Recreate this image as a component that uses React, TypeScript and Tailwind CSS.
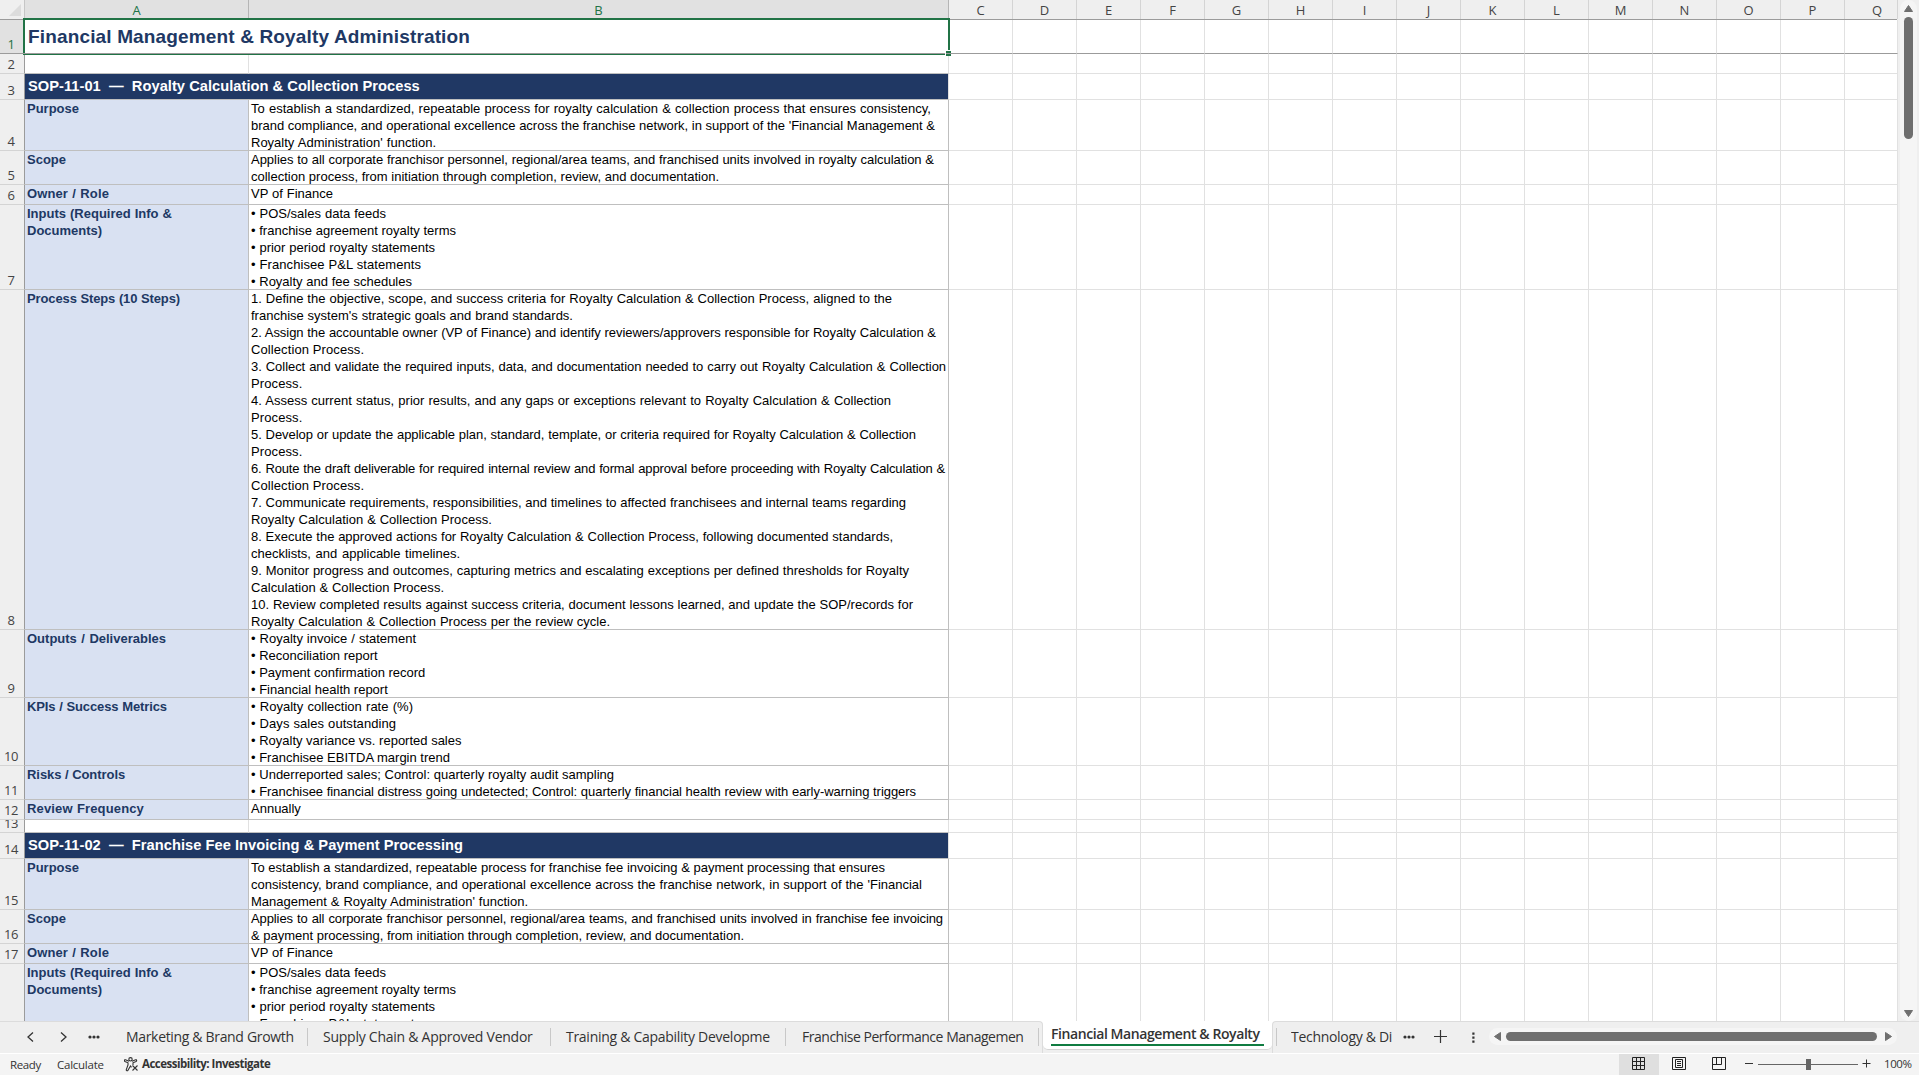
import React from "react";

const gridColumns = ["C", "D", "E", "F", "G", "H", "I", "J", "K", "L", "M", "N", "O", "P", "Q"];

// text of one printed line, its width in px and an optional tracking class
type Line = [string, number, string?];

type Row = {
  height: string;
  label?: Line[];
  title?: string;
  banner?: string;
  lines?: Line[];
};

const inputsLabel: Line[] = [["Inputs (Required Info &", 145], ["Documents)", 74]];
const ownerLabel: Line[] = [["Owner / Role", 82, "tracking-[0.12px]"]];

const inputs: Line[] = [
  ["• POS/sales data feeds", 135],
  ["• franchise agreement royalty terms", 205],
  ["• prior period royalty statements", 184],
  ["• Franchisee P&L statements", 170, "tracking-[0.06px]"],
  ["• Royalty and fee schedules", 161],
];

const rows: Row[] = [
  { height: "h-[34px]", title: "Financial Management & Royalty Administration" },
  { height: "h-5" },
  { height: "h-[26px]", banner: "SOP-11-01  —  Royalty Calculation & Collection Process" },
  {
    height: "h-[51px]",
    label: [["Purpose", 52]],
    lines: [
      ["To establish a standardized, repeatable process for royalty calculation & collection process that ensures consistency,", 680, "tracking-[0.03px]"],
      ["brand compliance, and operational excellence across the franchise network, in support of the 'Financial Management &", 684],
      ["Royalty Administration' function.", 185],
    ],
  },
  {
    height: "h-[34px]",
    label: [["Scope", 40]],
    lines: [
      ["Applies to all corporate franchisor personnel, regional/area teams, and franchised units involved in royalty calculation &", 683, "tracking-[-0.03px]"],
      ["collection process, from initiation through completion, review, and documentation.", 468],
    ],
  },
  { height: "h-5", label: ownerLabel, lines: [["VP of Finance", 82]] },
  { height: "h-[85px]", label: inputsLabel, lines: inputs },
  {
    height: "h-[340px]",
    label: [["Process Steps (10 Steps)", 153, "tracking-[-0.12px]"]],
    lines: [
      ["1. Define the objective, scope, and success criteria for Royalty Calculation & Collection Process, aligned to the", 641],
      ["franchise system's strategic goals and brand standards.", 322],
      ["2. Assign the accountable owner (VP of Finance) and identify reviewers/approvers responsible for Royalty Calculation &", 685, "tracking-[-0.04px]"],
      ["Collection Process.", 112, "tracking-[0.1px]"],
      ["3. Collect and validate the required inputs, data, and documentation needed to carry out Royalty Calculation & Collection", 695, "tracking-[-0.05px]"],
      ["Process.", 51, "tracking-[0.1px]"],
      ["4. Assess current status, prior results, and any gaps or exceptions relevant to Royalty Calculation & Collection", 640],
      ["Process.", 51, "tracking-[0.1px]"],
      ["5. Develop or update the applicable plan, standard, template, or criteria required for Royalty Calculation & Collection", 665, "tracking-[-0.05px]"],
      ["Process.", 51, "tracking-[0.1px]"],
      ["6. Route the draft deliverable for required internal review and formal approval before proceeding with Royalty Calculation &", 694, "tracking-[-0.16px]"],
      ["Collection Process.", 112, "tracking-[0.1px]"],
      ["7. Communicate requirements, responsibilities, and timelines to affected franchisees and internal teams regarding", 655],
      ["Royalty Calculation & Collection Process.", 241, "tracking-[0.05px]"],
      ["8. Execute the approved actions for Royalty Calculation & Collection Process, following documented standards,", 642],
      ["checklists, and applicable timelines.", 209],
      ["9. Monitor progress and outcomes, capturing metrics and escalating exceptions per defined thresholds for Royalty", 658],
      ["Calculation & Collection Process.", 193, "tracking-[0.05px]"],
      ["10. Review completed results against success criteria, document lessons learned, and update the SOP/records for", 662],
      ["Royalty Calculation & Collection Process per the review cycle.", 359],
    ],
  },
  {
    height: "h-[68px]",
    label: [["Outputs / Deliverables", 139]],
    lines: [
      ["• Royalty invoice / statement", 165],
      ["• Reconciliation report", 126],
      ["• Payment confirmation record", 174],
      ["• Financial health report", 136],
    ],
  },
  {
    height: "h-[68px]",
    label: [["KPIs / Success Metrics", 140, "tracking-[-0.1px]"]],
    lines: [
      ["• Royalty collection rate (%)", 162],
      ["• Days sales outstanding", 145, "tracking-[0.06px]"],
      ["• Royalty variance vs. reported sales", 209],
      ["• Franchisee EBITDA margin trend", 199],
    ],
  },
  {
    height: "h-[34px]",
    label: [["Risks / Controls", 96, "tracking-[-0.05px]"]],
    lines: [
      ["• Underreported sales; Control: quarterly royalty audit sampling", 363],
      ["• Franchisee financial distress going undetected; Control: quarterly financial health review with early-warning triggers", 665, "tracking-[-0.05px]"],
    ],
  },
  { height: "h-5", label: [["Review Frequency", 117, "tracking-[0.15px]"]], lines: [["Annually", 51]] },
  { height: "h-[13px]" },
  { height: "h-[26px]", banner: "SOP-11-02  —  Franchise Fee Invoicing & Payment Processing" },
  {
    height: "h-[51px]",
    label: [["Purpose", 52]],
    lines: [
      ["To establish a standardized, repeatable process for franchise fee invoicing & payment processing that ensures", 634],
      ["consistency, brand compliance, and operational excellence across the franchise network, in support of the 'Financial", 671],
      ["Management & Royalty Administration' function.", 277],
    ],
  },
  {
    height: "h-[34px]",
    label: [["Scope", 40]],
    lines: [
      ["Applies to all corporate franchisor personnel, regional/area teams, and franchised units involved in franchise fee invoicing", 692, "tracking-[-0.1px]"],
      ["& payment processing, from initiation through completion, review, and documentation.", 493],
    ],
  },
  { height: "h-5", label: ownerLabel, lines: [["VP of Finance", 82]] },
  { height: "h-[57px]", label: inputsLabel, lines: inputs.slice(0, 4) },
];

const tabs = [
  { name: "Marketing & Brand Growth", style: "w-[181px] tracking-[-0.33px]" },
  { name: "Supply Chain & Approved Vendor", style: "w-[242px] pl-[15px] tracking-[-0.25px]" },
  { name: "Training & Capability Developme", style: "w-[234px] pl-[15px] tracking-[-0.28px]" },
  { name: "Franchise Performance Managemen", style: "w-[252px] pl-4 tracking-[-0.48px]" },
];

const CellText: React.FC<{ lines?: Line[] }> = ({ lines }) => (
  <>
    {lines?.map(([text, width, tracking], i) => (
      <div key={i} className={`h-[17px] text-justify [text-align-last:justify] ${tracking ?? ""}`} style={{ width }}>
        {text}
      </div>
    ))}
  </>
);

const SheetRow: React.FC<{ row: Row; number: number }> = ({ row, number }) => {
  const isFirst = number === 1;
  const isLast = number === rows.length;
  const bottom = isLast ? "border-b-0" : "border-b";
  const lineColor = isFirst ? "border-b-[#9b9b9b]" : "border-b-[#e1e1e1]";
  const tableLine = isFirst ? "border-b-[#9b9b9b]" : "border-b-[#bfbfbf]";

  return (
    <div className={`flex shrink-0 ${row.height}`}>
      <div
        className={`w-[25px] shrink-0 flex items-end justify-center overflow-hidden border-r border-r-[#9b9b9b] pr-0.5 pb-px font-['Open_Sans','Noto_Sans',sans-serif] text-[13px] leading-4 tracking-[-0.4px] ${bottom} ${
          isFirst ? "bg-[#e1e1e1] text-[#217346] border-b-[#9b9b9b]" : "bg-[#efefef] text-[#444] border-b-[#d4d4d4]"
        }`}
      >
        {!isLast && number}
      </div>

      {row.title && (
        <div className={`w-[924px] shrink-0 border-b border-r border-r-[#e1e1e1] pl-[3px] pt-px text-[19px] leading-8 tracking-[0.15px] font-bold text-[#203864] ${tableLine}`}>
          {row.title}
        </div>
      )}
      {row.banner && (
        <div className={`w-[924px] shrink-0 border-b border-r border-r-[#e1e1e1] bg-[#203864] bg-clip-padding pl-[3px] text-[14.67px] leading-6 tracking-[0.03px] font-bold text-white whitespace-pre ${tableLine}`}>
          {row.banner}
        </div>
      )}
      {!row.title && !row.banner && (
        <>
          <div
            className={`w-56 shrink-0 overflow-hidden border-r pl-0.5 text-[13px] leading-[17px] font-bold text-[#203864] whitespace-nowrap ${bottom} ${tableLine} ${
              row.label ? "bg-[#d9e1f2] border-r-[#bfbfbf]" : "border-r-[#e1e1e1]"
            }`}
          >
            <CellText lines={row.label} />
          </div>
          <div
            className={`w-[700px] shrink-0 overflow-hidden border-r pl-0.5 text-[13px] leading-[17px] text-black whitespace-nowrap ${bottom} ${tableLine} ${
              row.lines ? "border-r-[#bfbfbf]" : "border-r-[#e1e1e1]"
            }`}
          >
            <CellText lines={row.lines} />
          </div>
        </>
      )}

      {gridColumns.map((col) => (
        <div key={col} className={`border-r border-r-[#e1e1e1] ${bottom} ${lineColor} ${col === "Q" ? "w-[53px]" : "w-16"} shrink-0`} />
      ))}
    </div>
  );
};

const ColumnHeaders: React.FC = () => (
  <div className="flex h-5 shrink-0 border-b border-[#9b9b9b] bg-[#efefef] font-['Open_Sans','Noto_Sans',sans-serif] text-[13px] leading-[21px] text-[#444] text-center">
    <div className="w-[25px] shrink-0 border-r border-[#c6c6c6] flex items-end justify-end pr-[3px] pb-[3px]">
      <svg width="12" height="12" viewBox="0 0 12 12">
        <path d="M12 0V12H0Z" fill="#dcdcdc" />
      </svg>
    </div>
    <div className="w-56 shrink-0 border-r border-[#b5b5b5] bg-[#e1e1e1] text-[#217346]">A</div>
    <div className="w-[700px] shrink-0 border-r border-[#b5b5b5] bg-[#e1e1e1] text-[#217346]">B</div>
    {gridColumns.map((col) => (
      <div key={col} className={`shrink-0 border-r border-[#d4d4d4] ${col === "Q" ? "w-[53px] pl-3" : "w-16"}`}>
        {col}
      </div>
    ))}
  </div>
);

const VerticalScrollbar: React.FC = () => (
  <div className="w-[22px] shrink-0 bg-[#efefef] pl-[3px]">
    <div className="flex h-full w-[17px] flex-col items-center rounded-full bg-[#f5f5f5] pt-[5px] pb-1">
      <svg width="9" height="7" viewBox="0 0 9 7">
        <path d="M4.5 0.5L8.5 6.5H0.5Z" fill="#6f6f6f" stroke="#6f6f6f" strokeLinejoin="round" />
      </svg>
      <div className="mt-[5px] h-[122px] w-[9px] rounded-full bg-[#6f6f6f]" />
      <svg className="mt-auto" width="9" height="7" viewBox="0 0 9 7">
        <path d="M4.5 6.5L0.5 0.5H8.5Z" fill="#6f6f6f" stroke="#6f6f6f" strokeLinejoin="round" />
      </svg>
    </div>
  </div>
);

const Divider: React.FC = () => <div className="mt-1.5 h-[18px] w-px shrink-0 bg-[#c8c8c8]" />;

const Dots: React.FC = () => (
  <svg className="mt-[13px] shrink-0" width="12" height="4" viewBox="0 0 12 4" fill="#333">
    <circle cx="2" cy="2" r="1.6" />
    <circle cx="6" cy="2" r="1.6" />
    <circle cx="10" cy="2" r="1.6" />
  </svg>
);

const SheetTabs: React.FC = () => (
  <div className="flex h-8 shrink-0 bg-white font-['Open_Sans','Noto_Sans',sans-serif] text-[14px] leading-[30px] text-[#333] whitespace-nowrap">
    <div className="flex w-[1043px] shrink-0 rounded-tr-[4px] border-t border-r border-[#dcdcdc] bg-[#efefef]">
      <svg className="mt-[10px] ml-[26px] shrink-0" width="10" height="10" viewBox="0 0 10 10" fill="none" stroke="#333" strokeWidth="1.3">
        <path d="M7 0.5L2 5L7 9.5" />
      </svg>
      <svg className="mt-[10px] ml-[23px] shrink-0" width="10" height="10" viewBox="0 0 10 10" fill="none" stroke="#333" strokeWidth="1.3">
        <path d="M2 0.5L7 5L2 9.5" />
      </svg>
      <div className="ml-[19px] mr-[26px] flex shrink-0">
        <Dots />
      </div>
      {tabs.map((tab) => (
        <React.Fragment key={tab.name}>
          <div className={`shrink-0 ${tab.style}`}>{tab.name}</div>
          <Divider />
        </React.Fragment>
      ))}
    </div>

    <div className="w-[229px] shrink-0 bg-[#efefef]">
      <div className="h-[29px] rounded-b-[5px] border-b border-[#d4d4d4] bg-white pl-2 pr-2">
        <div className="h-[25px] border-b-2 border-[#107c41] font-semibold leading-[26px] tracking-[-0.42px]">
          Financial Management &amp; Royalty
        </div>
      </div>
    </div>

    <div className="flex w-[647px] shrink-0 rounded-tl-[4px] border-t border-l border-[#dcdcdc] bg-[#efefef]">
      <div className="w-[3px] shrink-0" />
      <Divider />
      <div className="ml-3.5 w-[103px] shrink-0 overflow-hidden tracking-[-0.3px]">Technology &amp; Di</div>
      <div className="ml-[9px] flex w-[31px] shrink-0">
        <Dots />
      </div>
      <svg className="mt-2 shrink-0" width="13" height="13" viewBox="0 0 13 13" stroke="#333" strokeWidth="1.2">
        <path d="M0 6.5H13M6.5 0V13" />
      </svg>
      <svg className="mt-[10px] ml-[25px] shrink-0" width="3" height="11" viewBox="0 0 3 11" fill="#333">
        <path d="M0.3 0.5h2.2v2.2H0.3zM0.3 4.5h2.2v2.2H0.3zM0.3 8.5h2.2v2.2H0.3z" />
      </svg>
      <div className="mt-1.5 ml-auto mr-[22px] flex h-[17px] w-[408px] shrink-0 items-center rounded-full bg-[#f5f5f5] pl-[5px]">
        <svg width="7" height="9" viewBox="0 0 7 9">
          <path d="M0.5 4.5L6.5 0.5V8.5Z" fill="#6f6f6f" stroke="#6f6f6f" strokeLinejoin="round" />
        </svg>
        <div className="ml-[5px] h-[9px] w-[371px] rounded-full bg-[#6f6f6f]" />
        <svg className="ml-2" width="7" height="9" viewBox="0 0 7 9">
          <path d="M6.5 4.5L0.5 0.5V8.5Z" fill="#6f6f6f" stroke="#6f6f6f" strokeLinejoin="round" />
        </svg>
      </div>
    </div>
  </div>
);

const StatusBar: React.FC = () => (
  <div className="flex h-[22px] shrink-0 border-t border-white bg-[#f4f4f4] font-['Open_Sans','Noto_Sans',sans-serif] text-[11.5px] leading-[22px] text-[#333] whitespace-nowrap">
    <div className="w-[57px] shrink-0 pl-2.5 tracking-[-0.4px]">Ready</div>
    <div className="w-[67px] shrink-0 tracking-[-0.25px]">Calculate</div>
    <svg className="mt-[3px] shrink-0" width="15" height="15" viewBox="0 0 15 15" fill="none" stroke="#333" strokeWidth="1.1">
      <circle cx="6.5" cy="2.3" r="1.7" />
      <path d="M5 4.2L1.5 2.8C0.4 2.4 0 4 1 4.5L4 5.8V8L2.3 12.6C2 13.8 3.5 14.2 4 13.2L6.5 9L7.5 10.4M8 4.2L11.6 2.8C12.7 2.4 13 4 12 4.5L9 5.8V8" />
      <path d="M8.5 8.5L13.5 13.5M13.5 8.5L8.5 13.5" />
    </svg>
    <div className="ml-[3px] leading-5 font-bold tracking-[-0.5px]">Accessibility: Investigate</div>

    <div className="ml-auto flex w-[300px] shrink-0 items-start">
      <div className="h-full w-10 bg-[#dfdfdf] pt-[3px] pl-[13px]">
        <svg width="13" height="13" viewBox="0 0 13 13" fill="none" stroke="#222">
          <path d="M0.5 0.5H12.5V12.5H0.5ZM4.5 0.5V12.5M8.5 0.5V12.5M0.5 4.5H12.5M0.5 8.5H12.5" />
        </svg>
      </div>
      <div className="flex w-10 justify-center pt-[3px]">
        <svg width="14" height="13" viewBox="0 0 14 13" fill="none" stroke="#222">
          <path d="M0.5 0.5H13.5V12.5H0.5ZM3.5 2.5H10.5V10.5H3.5ZM5 4.5H9M5 6.5H9M5 8.5H9" />
        </svg>
      </div>
      <div className="flex w-10 justify-center pt-[3px]">
        <svg width="14" height="13" viewBox="0 0 14 13" fill="none" stroke="#222">
          <path d="M0.5 0.5H13.5V12.5H0.5ZM4.5 0.5V7.5M9.5 0.5V7.5M0.5 7.5H9.5" />
        </svg>
      </div>
      <div className="mt-[9px] ml-1.5 h-px w-2 bg-[#333]" />
      <div className="mt-[5px] ml-[5px] flex h-[11px] w-[100px] items-center justify-center bg-[linear-gradient(#666,#666)] bg-[length:100%_1px] bg-center bg-no-repeat">
        <div className="h-[11px] w-[5px] bg-[#666]" />
      </div>
      <svg className="mt-[5px] ml-1" width="9" height="9" viewBox="0 0 9 9" stroke="#333">
        <path d="M0.5 4.5H8.5M4.5 0.5V8.5" />
      </svg>
      <div className="ml-[13px] leading-5 tracking-[-0.4px]">100%</div>
    </div>
  </div>
);

export default function App() {
  return (
    <div className="flex h-[1075px] w-[1919px] flex-col overflow-hidden bg-[#efefef] font-['Liberation_Sans',Arial,sans-serif]">
      <div className="flex h-[1021px] shrink-0 bg-white">
        <div className="relative flex w-[1897px] shrink-0 flex-col">
          <ColumnHeaders />
          {rows.map((row, i) => (
            <SheetRow key={i} row={row} number={i + 1} />
          ))}
          {/* selection outline and fill handle */}
          <div className="pointer-events-none absolute left-[23px] top-[18px] h-[37px] w-[927px] border-2 border-[#217346]" />
          <div className="absolute left-[23px] top-[53px] h-px w-[927px] bg-[#9b9b9b]" />
          <div className="absolute left-[945px] top-[50px] size-[6px] border-t border-l border-white bg-[#217346]" />
          <div className="absolute left-[946px] top-[53px] h-px w-[5px] bg-[#9b9b9b]" />
        </div>
        <VerticalScrollbar />
      </div>
      <SheetTabs />
      <StatusBar />
    </div>
  );
}
